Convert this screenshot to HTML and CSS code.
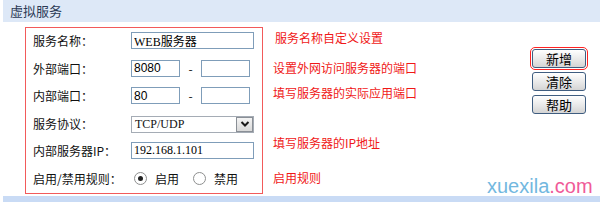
FILE: index.html
```html
<!DOCTYPE html>
<html lang="zh-CN">
<head>
    <meta charset="UTF-8">
    <title>虚拟服务</title>
    <link rel="stylesheet" href="styles.css">
</head>
<body>

<div class="panel">
    <div class="panel-title">虚拟服务</div>

    <div class="content">
        <div class="form-box">
            <div class="row">
                <label>服务名称：</label>
                <input type="text" class="txt wide" value="WEB服务器">
            </div>
            <div class="row">
                <label>外部端口：</label>
                <input type="text" class="txt port" value="8080">
                <span class="dash">-</span>
                <input type="text" class="txt port" value="">
            </div>
            <div class="row">
                <label>内部端口：</label>
                <input type="text" class="txt port" value="80">
                <span class="dash">-</span>
                <input type="text" class="txt port" value="">
            </div>
            <div class="row">
                <label>服务协议：</label>
                <div class="select">
                    <span class="select-text">TCP/UDP</span>
                    <span class="select-btn">
                        <svg width="10" height="8" viewBox="0 0 10 8"><path d="M1.5 2 L5 5.5 L8.5 2" fill="none" stroke="#1a1a1a" stroke-width="2"/></svg>
                    </span>
                </div>
            </div>
            <div class="row">
                <label>内部服务器IP：</label>
                <input type="text" class="txt wide" value="192.168.1.101">
            </div>
            <div class="row">
                <label>启用/禁用规则：</label>
                <span class="radio checked"></span><span class="radio-text">启用</span>
                <span class="radio"></span><span class="radio-text">禁用</span>
            </div>
        </div>

        <div class="notes">
            <div class="note n1">服务名称自定义设置</div>
            <div class="note n2">设置外网访问服务器的端口</div>
            <div class="note n3">填写服务器的实际应用端口</div>
            <div class="note n4">填写服务器的IP地址</div>
            <div class="note n5">启用规则</div>
        </div>

        <div class="buttons">
            <button class="btn marked">新增</button>
            <button class="btn">清除</button>
            <button class="btn">帮助</button>
        </div>
    </div>

    <div class="panel-bottom"></div>
</div>

<div class="watermark">xuexila<span class="dot-com">.com</span></div>

</body>
</html>
```

FILE: styles.css
```css
body {
    margin: 0;
    background: #fff;
    font-family: "Noto Sans CJK SC", "DejaVu Sans", sans-serif;
    font-size: 12px;
    color: #111;
    position: relative;
    width: 600px;
    height: 202px;
    overflow: hidden;
}
.panel {
    margin-left: 3px;
}
.panel-title {
    height: 22px;
    line-height: 22px;
    background: #dde8f7;
    padding-left: 7px;
    font-size: 13px;
    color: #2b3a55;
}
.content {
    display: flex;
    margin-top: 5px;
}
.form-box {
    margin-left: 22px;
    width: 229px;
    padding-left: 7px;
    border: 1px solid #f25a5a;
    display: grid;
    grid-template-rows: repeat(6, 27.5px);
}
.row {
    display: flex;
    align-items: flex-start;
    padding-top: 4px;
}
.row label {
    width: 98px;
    line-height: 17px;
    color: #111;
}
.txt {
    box-sizing: border-box;
    height: 17px;
    border: 1px solid #7f9db9;
    padding: 0 2px;
    margin: 0;
    font-family: "Liberation Serif", "Noto Sans CJK SC", serif;
    font-size: 12px;
    color: #000;
    outline: none;
}
.wide {
    width: 123px;
}
.port {
    width: 49px;
    font-family: "Liberation Sans", sans-serif;
}
.dash {
    width: 21px;
    text-align: center;
    line-height: 17px;
}
.select {
    box-sizing: border-box;
    width: 123px;
    height: 17px;
    border: 1px solid #a5acb5;
    display: flex;
    align-items: center;
    margin-top: 1px;
}
.select-text {
    flex: 1;
    padding-left: 3px;
    font-family: "Liberation Serif", serif;
    font-size: 12px;
}
.select-btn {
    width: 17px;
    height: 15px;
    box-sizing: border-box;
    border: 1px solid #8a8f96;
    background: linear-gradient(#f4f4f4, #d9d9d9);
    display: flex;
    align-items: center;
    justify-content: center;
}
.radio {
    box-sizing: border-box;
    width: 13px;
    height: 13px;
    border: 1px solid #8e8f8f;
    border-radius: 50%;
    background: #fff;
    margin: 2px 8px 0 3px;
    position: relative;
}
.radio.checked::after {
    content: "";
    position: absolute;
    left: 3px;
    top: 3px;
    width: 5px;
    height: 5px;
    border-radius: 50%;
    background: #222;
}
.radio-text {
    line-height: 17px;
    margin-right: 11px;
}
.notes {
    margin-left: 10px;
    color: #f01818;
}
.note {
    line-height: 17px;
}
.n1 { margin-top: 2px; margin-left: 2px; }
.n2 { margin-top: 13px; }
.n3 { margin-top: 8px; }
.n4 { margin-top: 33px; }
.n5 { margin-top: 18px; }
.buttons {
    margin-left: auto;
    margin-right: 14px;
    margin-top: 22px;
    display: flex;
    flex-direction: column;
    gap: 4px;
}
.btn {
    width: 54px;
    height: 19px;
    padding: 0;
    border: 1px solid #3f5d80;
    border-radius: 3px;
    background: linear-gradient(#ffffff, #e6e6e6 60%, #d4d4d4);
    font-family: "Noto Sans CJK SC", sans-serif;
    font-size: 13px;
    line-height: 16px;
    color: #000;
    cursor: pointer;
}
.btn.marked {
    outline: 1px solid #f22;
    outline-offset: 1px;
}
.panel-bottom {
    margin-top: 2px;
    height: 6px;
    background: #c9dbf5;
}
.watermark {
    position: absolute;
    left: 487px;
    top: 175px;
    font-family: "Liberation Sans", Arial, sans-serif;
    font-size: 20px;
    color: #72b8df;
}
.dot-com {
    color: #f05b98;
}
```
